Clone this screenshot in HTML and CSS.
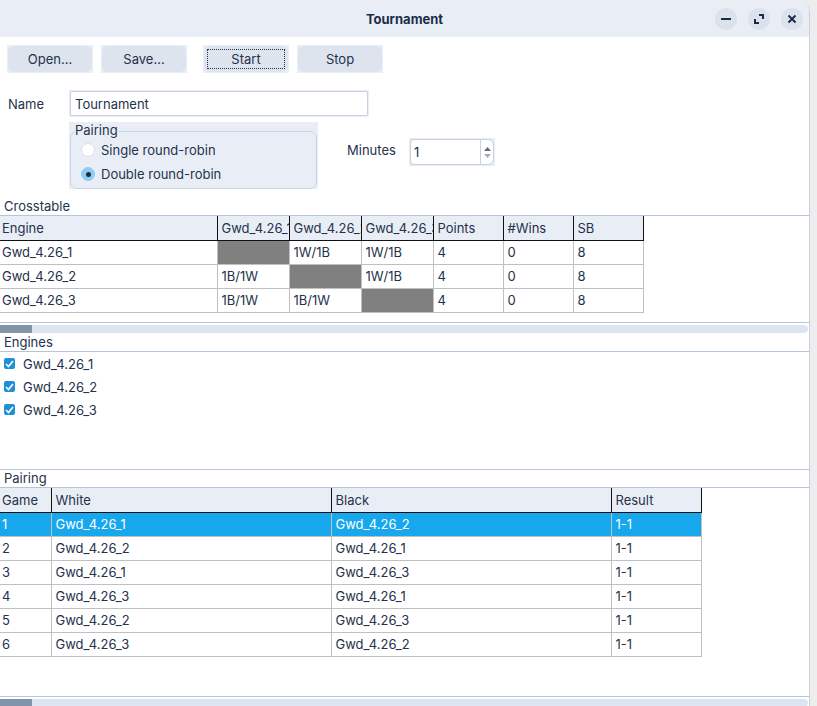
FILE: index.html
```html
<!DOCTYPE html>
<html lang="en">
  <head>
    <meta charset="UTF-8" />
    <meta name="viewport" content="width=device-width, initial-scale=1.0" />
    <title>Tournament</title>
    <link rel="stylesheet" href="styles.css">
  </head>
  <body>
    <div class="window">
      <div class="titlebar">
        <span></span>
        <span class="title">Tournament</span>
        <div class="controls">
          <span class="ctl">
            <svg width="10" height="10" viewBox="0 0 10 10"><rect x="0" y="4" width="10" height="2" fill="#1b2c48" /></svg>
          </span>
          <span class="ctl">
            <svg width="10" height="10" viewBox="0 0 10 10">
              <path d="M5 1H9V5M1 5V9H5" fill="none" stroke="#1b2c48" stroke-width="2" />
            </svg>
          </span>
          <span class="ctl">
            <svg width="10" height="10" viewBox="0 0 10 10">
              <path d="M1.5 1.5L8.5 8.5M8.5 1.5L1.5 8.5" stroke="#1b2c48" stroke-width="2" />
            </svg>
          </span>
        </div>
      </div>

      <div class="toolbar">
        <span class="btn-wrap"><button>Open...</button></span>
        <span class="btn-wrap"><button>Save...</button></span>
        <span class="btn-wrap start"><button class="focused"><span>Start</span></button></span>
        <span class="btn-wrap"><button>Stop</button></span>
      </div>

      <div class="name-row">
        <label class="name-label">Name</label>
        <span class="input-wrap"><input type="text" value="Tournament" /></span>
      </div>

      <div class="options-row">
        <fieldset class="group">
          <legend>Pairing</legend>
          <div class="radio"><span class="dot"></span>Single round-robin</div>
          <div class="radio"><span class="dot checked"></span>Double round-robin</div>
        </fieldset>
        <label class="minutes-label">Minutes</label>
        <span class="spin">
          <span class="spin-value">1</span>
          <span class="spin-arrows">
            <svg width="7" height="4" viewBox="0 0 7 4"><path d="M0 4L3.5 0L7 4Z" fill="#5a6b85" /></svg>
            <svg width="7" height="4" viewBox="0 0 7 4"><path d="M0 0L3.5 4L7 0Z" fill="#a0adbf" /></svg>
          </span>
        </span>
      </div>

      <div class="section-label first">Crosstable</div>
      <div class="panel cross-panel">
        <table class="grid cross">
          <thead>
            <tr>
              <th class="c-engine">Engine</th>
              <th class="c-res">Gwd_4.26_1</th>
              <th class="c-res">Gwd_4.26_2</th>
              <th class="c-res">Gwd_4.26_3</th>
              <th class="c-num">Points</th>
              <th class="c-num">#Wins</th>
              <th class="c-num">SB</th>
            </tr>
          </thead>
          <tbody>
            <tr>
              <td>Gwd_4.26_1</td><td class="self"></td><td>1W/1B</td><td>1W/1B</td><td>4</td><td>0</td><td>8</td>
            </tr>
            <tr>
              <td>Gwd_4.26_2</td><td>1B/1W</td><td class="self"></td><td>1W/1B</td><td>4</td><td>0</td><td>8</td>
            </tr>
            <tr>
              <td>Gwd_4.26_3</td><td>1B/1W</td><td>1B/1W</td><td class="self"></td><td>4</td><td>0</td><td>8</td>
            </tr>
          </tbody>
        </table>
      </div>
      <div class="scrollbar"><span class="thumb"></span></div>

      <div class="section-label">Engines</div>
      <div class="panel engines-panel">
        <div class="check"><span class="box"><svg width="9" height="8" viewBox="0 0 9 8"><path d="M1 4L3.5 6.5L8 1" fill="none" stroke="#fff" stroke-width="1.6" /></svg></span>Gwd_4.26_1</div>
        <div class="check"><span class="box"><svg width="9" height="8" viewBox="0 0 9 8"><path d="M1 4L3.5 6.5L8 1" fill="none" stroke="#fff" stroke-width="1.6" /></svg></span>Gwd_4.26_2</div>
        <div class="check"><span class="box"><svg width="9" height="8" viewBox="0 0 9 8"><path d="M1 4L3.5 6.5L8 1" fill="none" stroke="#fff" stroke-width="1.6" /></svg></span>Gwd_4.26_3</div>
      </div>

      <div class="section-label">Pairing</div>
      <div class="panel pairing-panel">
        <table class="grid pairs">
          <thead>
            <tr>
              <th class="p-game">Game</th>
              <th class="p-name">White</th>
              <th class="p-name">Black</th>
              <th class="p-result">Result</th>
            </tr>
          </thead>
          <tbody>
            <tr class="selected"><td>1</td><td>Gwd_4.26_1</td><td>Gwd_4.26_2</td><td>1-1</td></tr>
            <tr><td>2</td><td>Gwd_4.26_2</td><td>Gwd_4.26_1</td><td>1-1</td></tr>
            <tr><td>3</td><td>Gwd_4.26_1</td><td>Gwd_4.26_3</td><td>1-1</td></tr>
            <tr><td>4</td><td>Gwd_4.26_3</td><td>Gwd_4.26_1</td><td>1-1</td></tr>
            <tr><td>5</td><td>Gwd_4.26_2</td><td>Gwd_4.26_3</td><td>1-1</td></tr>
            <tr><td>6</td><td>Gwd_4.26_3</td><td>Gwd_4.26_2</td><td>1-1</td></tr>
          </tbody>
        </table>
      </div>
      <div class="scrollbar"><span class="thumb"></span></div>
    </div>
  </body>
</html>
```

FILE: styles.css
```css
* {
  margin: 0;
  padding: 0;
  box-sizing: border-box;
}

body {
  font-family: "Inter", "Noto Sans", sans-serif;
  font-size: 13px;
  color: #25324a;
  background: #ededed;
  overflow: hidden;
}

.window {
  width: 810px;
  height: 720px;
  margin-top: 1px;
  background: white;
  border-right: 1px solid #c9d0d9;
  border-radius: 8px 12px 0 0;
  overflow: hidden;
}

.titlebar {
  height: 36px;
  background: #e9eef6;
  display: grid;
  grid-template-columns: 1fr auto 1fr;
  align-items: center;
}

.title {
  font-weight: bold;
  color: #1b2c48;
}

.controls {
  justify-self: end;
  display: flex;
  gap: 11px;
  padding-right: 6px;
}

.ctl {
  width: 22px;
  height: 22px;
  border-radius: 50%;
  background: #dbe2ec;
  display: flex;
  align-items: center;
  justify-content: center;
}

.toolbar {
  display: flex;
  gap: 8px;
  padding: 8px 0 0 7px;
}

.btn-wrap {
  display: block;
  width: 86px;
  height: 28px;
  padding: 1px;
  background: #e9eef6;
}

.btn-wrap.start {
  margin-left: 8px;
}

.btn-wrap button {
  width: 100%;
  height: 100%;
  border: none;
  border-radius: 6px;
  background: #dde4ee;
  font: inherit;
  color: #25324a;
}

.btn-wrap button.focused {
  padding: 3px;
}

.btn-wrap button.focused span {
  display: flex;
  align-items: center;
  justify-content: center;
  height: 100%;
  border: 1px dotted #25324a;
}

.name-row {
  display: flex;
  align-items: center;
  margin-top: 17px;
  height: 27px;
}

.name-label {
  width: 69px;
  padding-left: 8px;
}

.input-wrap {
  display: block;
  width: 300px;
  height: 27px;
  padding: 1px;
  background: #e9eef6;
}

.input-wrap input {
  width: 100%;
  height: 100%;
  border: 1px solid #c6d2e2;
  border-radius: 2px;
  font: inherit;
  color: #25324a;
  padding: 0 4px;
  outline: none;
}

.options-row {
  display: flex;
  align-items: flex-start;
  margin-top: 5px;
  padding-left: 69px;
}

.group {
  width: 249px;
  height: 67px;
  background: #e9eef6;
  border: none;
  position: relative;
  padding: 16px 0 0 12px;
}

.group::before {
  content: "";
  position: absolute;
  left: 1px;
  right: 1px;
  top: 9px;
  bottom: 0;
  border: 1px solid #c9d5e4;
  border-radius: 7px;
}

.group legend {
  position: absolute;
  top: 0;
  left: 5px;
  padding: 0 1px;
  background: #e9eef6;
  line-height: 17px;
  z-index: 1;
}

.radio {
  position: relative;
  display: flex;
  align-items: center;
  height: 24px;
  gap: 6px;
}

.dot {
  width: 14px;
  height: 14px;
  border-radius: 50%;
  background: white;
  border: 1px solid #d7dfea;
  display: flex;
  align-items: center;
  justify-content: center;
}

.dot.checked {
  background: #8dcdf2;
  border-color: #8dcdf2;
}

.dot.checked::after {
  content: "";
  width: 5px;
  height: 5px;
  border-radius: 50%;
  background: #1b2c48;
}

.minutes-label {
  margin: 19px 0 0 29px;
  width: 62px;
  line-height: 18px;
}

.spin {
  display: flex;
  width: 86px;
  height: 28px;
  margin-top: 16px;
  padding: 1px;
  background: #e9eef6;
}

.spin-value {
  flex: 1;
  background: white;
  border: 1px solid #c6d2e2;
  border-right: none;
  border-radius: 4px 0 0 4px;
  padding-left: 3px;
  display: flex;
  align-items: center;
}

.spin-arrows {
  width: 14px;
  background: white;
  border: 1px solid #c6d2e2;
  border-radius: 0 6px 6px 0;
  display: flex;
  flex-direction: column;
  align-items: center;
  justify-content: center;
  gap: 3px;
}

.section-label {
  height: 17px;
  line-height: 17px;
  padding-left: 4px;
}

.section-label.first {
  margin-top: 9px;
}

.panel {
  border-top: 1px solid #b4c6db;
  border-bottom: 1px solid #b4c6db;
  border-right: 1px solid #b4c6db;
  width: 810px;
}

.cross-panel {
  height: 108px;
}

.engines-panel {
  height: 119px;
}

.pairing-panel {
  height: 210px;
}

.grid {
  border-collapse: collapse;
  table-layout: fixed;
}

.cross {
  width: 643px;
}

.pairs {
  width: 701px;
}

.grid th,
.grid td {
  height: 24px;
  padding: 0 0 0 4px;
  text-align: left;
  font-weight: normal;
  white-space: nowrap;
  overflow: hidden;
  text-overflow: clip;
}

.grid th {
  background: #e9eef6;
  border-right: 1px solid #111;
  border-bottom: 1px solid #111;
}

.grid td {
  border-right: 1px solid #c0c0c0;
  border-bottom: 1px solid #c0c0c0;
}

.grid th:first-child,
.grid td:first-child {
  padding-left: 2px;
}

.c-engine {
  width: 217px;
}

.c-res {
  width: 72px;
}

.c-num {
  width: 70px;
}

.cross td.self {
  background: #808080;
}

.p-game {
  width: 51px;
}

.p-name {
  width: 280px;
}

.p-result {
  width: 90px;
}

.pairs tr.selected td {
  background: #16a7ec;
  color: white;
}

.check {
  display: flex;
  align-items: center;
  height: 23px;
  padding-left: 4px;
  gap: 8px;
}

.box {
  width: 11px;
  height: 11px;
  border-radius: 2px;
  background: #1e90d6;
  display: flex;
  align-items: center;
  justify-content: center;
}

.scrollbar {
  height: 8px;
  margin: 2px 0 1px;
  width: 808px;
  background: #dde6f0;
  border-radius: 0 4px 4px 0;
}

.thumb {
  display: block;
  width: 32px;
  height: 100%;
  background: #8294a9;
}
```
